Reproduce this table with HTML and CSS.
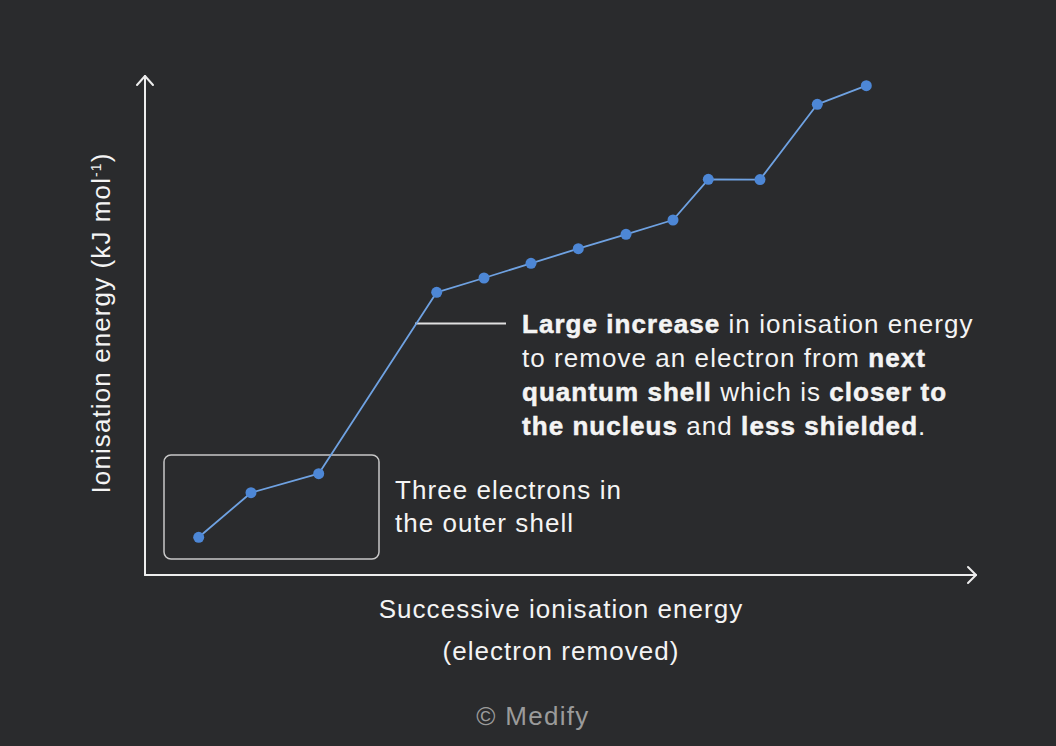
FILE: index.html
```html
<!DOCTYPE html>
<html lang="en">
<head>
<meta charset="utf-8">
<title>Successive ionisation energies</title>
<link rel="stylesheet" href="styles.css">
</head>
<body>
<div class="stage">
  <svg class="chart" width="1056" height="746" viewBox="0 0 1056 746" xmlns="http://www.w3.org/2000/svg">
    <g class="axes" fill="none" stroke="#ededed" stroke-width="2" stroke-linecap="round" stroke-linejoin="round">
      <line x1="145" y1="76" x2="145" y2="575"/>
      <line x1="145" y1="575" x2="976" y2="575"/>
      <polyline points="137,85 145,76 153,85"/>
      <polyline points="968,567 976,575 968,583"/>
    </g>
    <rect x="164" y="455" width="215" height="104" rx="7" ry="7" fill="none" stroke="#c8c8c8" stroke-width="1.5"/>
    <line x1="415" y1="323.5" x2="506" y2="323.5" stroke="#e0e0e0" stroke-width="2"/>
    <polyline fill="none" stroke="#6fa2e2" stroke-width="1.8" stroke-linejoin="round"
      points="198.7,537.3 251,492.7 318.7,473.7 436.7,292.3 484,278 531,263.3 578.3,248.7 626,234.3 673,220 708.3,179.3 760,179.6 817.3,104.3 866.3,85.7"/>
    <g fill="#4d87d6">
      <circle cx="198.7" cy="537.3" r="5.5"/>
      <circle cx="251" cy="492.7" r="5.5"/>
      <circle cx="318.7" cy="473.7" r="5.5"/>
      <circle cx="436.7" cy="292.3" r="5.5"/>
      <circle cx="484" cy="278" r="5.5"/>
      <circle cx="531" cy="263.3" r="5.5"/>
      <circle cx="578.3" cy="248.7" r="5.5"/>
      <circle cx="626" cy="234.3" r="5.5"/>
      <circle cx="673" cy="220" r="5.5"/>
      <circle cx="708.3" cy="179.3" r="5.5"/>
      <circle cx="760" cy="179.6" r="5.5"/>
      <circle cx="817.3" cy="104.3" r="5.5"/>
      <circle cx="866.3" cy="85.7" r="5.5"/>
    </g>
  </svg>

  <div class="y-label">Ionisation energy (kJ mol<sup>-1</sup>)</div>

  <p class="note note-large"><b>Large increase</b> in ionisation energy<br>to remove an electron from <b>next</b><br><b>quantum shell</b> which is <b>closer to</b><br><b>the nucleus</b> and <b>less shielded</b>.</p>

  <p class="note note-three">Three electrons in<br>the outer shell</p>

  <p class="x-label">Successive ionisation energy<br>(electron removed)</p>

  <p class="credit">© Medify</p>
</div>
</body>
</html>
```

FILE: styles.css
```css
html, body {
  margin: 0;
  padding: 0;
  background: #2a2b2d;
}

body {
  font-family: "Liberation Sans", Arial, sans-serif;
  color: #f4f4f4;
}

.stage {
  position: relative;
  width: 1056px;
  height: 746px;
  overflow: hidden;
  background: #2a2b2d;
}

.chart {
  position: absolute;
  left: 0;
  top: 0;
  display: block;
}

.note {
  position: absolute;
  margin: 0;
  font-size: 26px;
  line-height: 34px;
  letter-spacing: 1.05px;
  white-space: nowrap;
}

.note b {
  font-weight: 700;
  -webkit-text-stroke: 0.5px #f4f4f4;
}

.note-large {
  left: 522px;
  top: 307px;
}

.note-three {
  left: 395px;
  top: 474px;
  line-height: 33px;
}

.x-label {
  position: absolute;
  margin: 0;
  left: 261px;
  width: 600px;
  top: 588px;
  text-align: center;
  font-size: 26px;
  line-height: 42px;
  letter-spacing: 1.05px;
}

.credit {
  position: absolute;
  margin: 0;
  left: 383px;
  width: 300px;
  top: 699px;
  text-align: center;
  font-size: 26px;
  line-height: 34px;
  color: #9b9b9b;
  letter-spacing: 1.3px;
}

.y-label {
  position: absolute;
  left: -99px;
  top: 306px;
  width: 400px;
  height: 34px;
  line-height: 34px;
  text-align: center;
  font-size: 26px;
  letter-spacing: 1.1px;
  white-space: nowrap;
  transform: rotate(-90deg);
  transform-origin: 200px 17px;
}

.y-label sup {
  font-size: 14px;
  line-height: 0;
  vertical-align: 9px;
}
```
